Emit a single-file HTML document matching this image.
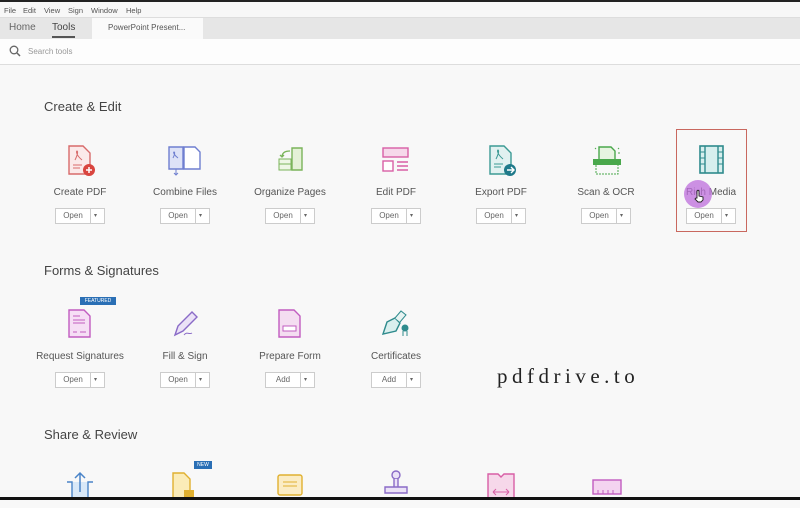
<!DOCTYPE html>
<html><head><style>
*{margin:0;padding:0;box-sizing:border-box}
body{width:800px;height:500px;overflow:hidden;background:#f8f8f8;font-family:"Liberation Sans",sans-serif;position:relative;color:#444}
.a{position:absolute}
.menu{top:0;left:0;width:800px;height:17px;background:#f7f7f7;border-top:2px solid #222;font-size:7.5px;color:#555}
.menu span{position:absolute;top:4px}
.tabs{top:17px;left:0;width:800px;height:22px;background:#e6e6e6;border-top:1px solid #ddd}
.search{top:39px;left:0;width:800px;height:26px;background:#fdfdfd;border-bottom:1px solid #ddd}
h2{position:absolute;font-weight:normal;font-size:13px;color:#444;left:44px}
.t{position:absolute;width:100px;text-align:center;font-size:10px;color:#555}
.btn{position:absolute;width:50px;height:16px;border:1px solid #ccc;background:#fff;font-size:8px;color:#666}
.btn .l{position:absolute;left:0;top:0;width:35px;height:14px;line-height:14px;text-align:center;border-right:1px solid #ccc}
.btn .r{position:absolute;left:38px;top:3px;font-size:6px}
svg{position:absolute}
</style></head><body>
<div class="a menu"><span style="left:4px">File</span><span style="left:23px">Edit</span><span style="left:44px">View</span><span style="left:68px">Sign</span><span style="left:91px">Window</span><span style="left:126px">Help</span></div>
<div class="a tabs">
<span class="a" style="left:9px;top:4px;font-size:10px;color:#666">Home</span>
<span class="a" style="left:52px;top:4px;font-size:10px;color:#444">Tools</span>
<div class="a" style="left:52px;top:18px;width:23px;height:2px;background:#555"></div>
<div class="a" style="left:92px;top:0;width:111px;height:21px;background:#fafafa;font-size:8px;color:#555;padding:5px 0 0 16px">PowerPoint Present...</div>
</div>
<div class="a search">
<svg width="12" height="12" style="left:9px;top:6px"><circle cx="5" cy="5" r="3.8" fill="none" stroke="#666" stroke-width="1.3"/><path d="M8 8l3 3" stroke="#666" stroke-width="1.5"/></svg>
<span class="a" style="left:28px;top:8px;font-size:8px;color:#999">Search tools</span>
</div>

<h2 style="top:99px">Create &amp; Edit</h2>
<h2 style="top:263px">Forms &amp; Signatures</h2>
<h2 style="top:427px">Share &amp; Review</h2>

<svg width="30" height="32" style="left:66px;top:145px"><path d="M3 1h14l7 7v21H3z" fill="#fbe9e9" stroke="#d86b6b" stroke-width="1.4"/><path d="M7 20h9M7 23h7" stroke="#d86b6b"/><path d="M9 15c3-6 3-9 2-9s-1 4 5 9" fill="none" stroke="#d86b6b"/><circle cx="23" cy="25" r="6" fill="#d9453f"/><path d="M23 22v6M20 25h6" stroke="#fff" stroke-width="1.5"/></svg>
<svg width="36" height="34" style="left:167px;top:144px"><path d="M2 3h14v22H2z" fill="#dde2f7" stroke="#6f7fd0" stroke-width="1.4"/><path d="M17 3h11l5 5v17H17z" fill="#fff" stroke="#6f7fd0" stroke-width="1.4"/><path d="M9 25v6M7 29l2 2 2-2" stroke="#6f7fd0" fill="none"/><path d="M6 14c2-4 2-6 1-6s0 3 4 6" stroke="#6f7fd0" fill="none"/></svg>
<svg width="32" height="32" style="left:275px;top:145px"><path d="M17 3h10v22H17z" fill="#e4f1d7" stroke="#7ab45a" stroke-width="1.4"/><path d="M4 14h12v11H4z" fill="#eef6e5" stroke="#7ab45a"/><path d="M4 19h12" stroke="#7ab45a"/><path d="M15 6c-5 0-8 2-8 6M5 10l2 2 2-2" stroke="#7ab45a" fill="none" stroke-width="1.3"/></svg>
<svg width="32" height="32" style="left:380px;top:145px"><rect x="3" y="3" width="25" height="9" fill="#f6d8ea" stroke="#d85fa6" stroke-width="1.4"/><rect x="3" y="16" width="10" height="10" fill="#fff" stroke="#d85fa6" stroke-width="1.4"/><path d="M17 17h11M17 21h11M17 25h11" stroke="#d85fa6" stroke-width="1.4"/></svg>
<svg width="32" height="34" style="left:487px;top:144px"><path d="M3 2h14l7 7v21H3z" fill="#e1f1f0" stroke="#3c9a94" stroke-width="1.4"/><path d="M7 20h9M7 23h7" stroke="#3c9a94"/><path d="M9 15c3-6 3-9 2-9s-1 4 5 9" fill="none" stroke="#3c9a94"/><circle cx="23" cy="26" r="6" fill="#1f7a8a"/><path d="M20 26h6M24 23l3 3-3 3" stroke="#fff" stroke-width="1.4" fill="none"/></svg>
<svg width="34" height="34" style="left:590px;top:143px"><path d="M9 4h12l4 4v10H9z" fill="#e7f4e1" stroke="#4aa84c" stroke-width="1.4"/><rect x="3" y="16" width="28" height="6" fill="#4aa84c"/><path d="M6 22v9h22v-9" stroke="#4aa84c" stroke-dasharray="2 1" fill="none"/><path d="M5 5l1 1M29 5l-1 1M30 10h-2" stroke="#4aa84c"/></svg>
<svg width="30" height="32" style="left:697px;top:144px"><rect x="3" y="2" width="23" height="27" fill="#d7efee" stroke="#2f8b8d" stroke-width="1.6"/><path d="M8 2v27M21 2v27" stroke="#2f8b8d" stroke-width="1.4"/><path d="M3 8h5M3 14h5M3 20h5M21 8h5M21 14h5M21 20h5" stroke="#2f8b8d"/></svg>

<div class="t" style="left:30px;top:187px">Create PDF</div>
<div class="t" style="left:135px;top:187px">Combine Files</div>
<div class="t" style="left:240px;top:187px">Organize Pages</div>
<div class="t" style="left:346px;top:187px">Edit PDF</div>
<div class="t" style="left:451px;top:187px">Export PDF</div>
<div class="t" style="left:556px;top:187px">Scan &amp; OCR</div>
<div class="t" style="left:661px;top:187px">Rich Media</div>

<div class="btn" style="left:55px;top:208px"><span class="l">Open</span><span class="r">▾</span></div>
<div class="btn" style="left:160px;top:208px"><span class="l">Open</span><span class="r">▾</span></div>
<div class="btn" style="left:265px;top:208px"><span class="l">Open</span><span class="r">▾</span></div>
<div class="btn" style="left:371px;top:208px"><span class="l">Open</span><span class="r">▾</span></div>
<div class="btn" style="left:476px;top:208px"><span class="l">Open</span><span class="r">▾</span></div>
<div class="btn" style="left:581px;top:208px"><span class="l">Open</span><span class="r">▾</span></div>
<div class="btn" style="left:686px;top:208px"><span class="l">Open</span><span class="r">▾</span></div>
<div class="a" style="left:676px;top:129px;width:71px;height:103px;border:1px solid #c9685f"></div>
<div class="a" style="left:684px;top:180px;width:28px;height:28px;border-radius:50%;background:rgba(190,110,220,.75)"></div>
<svg width="12" height="14" style="left:693px;top:189px"><path d="M4 9V2.5a1 1 0 0 1 2 0V7l4 1v3l-2 2H5L2 10l1-1z" fill="#fff" stroke="#222" stroke-width="0.9"/></svg>

<div class="a" style="left:80px;top:297px;width:36px;height:8px;background:#2a6fb5;color:#fff;font-size:5px;line-height:8px;text-align:center">FEATURED</div>
<svg width="30" height="32" style="left:66px;top:308px"><path d="M3 2h15l6 6v21H3z" fill="#f6def5" stroke="#c15cc0" stroke-width="1.4"/><path d="M7 8h7M7 12h12M7 15h12M7 24h4M14 24h6" stroke="#c15cc0"/></svg>
<svg width="32" height="32" style="left:170px;top:308px"><path d="M5 27l3-9L22 4l5 5-14 14z" fill="#ebe2f7" stroke="#8a6bc7" stroke-width="1.4"/><path d="M14 27c3-4 5 0 8-2" stroke="#8a6bc7" fill="none"/></svg>
<svg width="30" height="32" style="left:276px;top:308px"><path d="M3 2h15l6 6v21H3z" fill="#f4ddf1" stroke="#c15cc0" stroke-width="1.4"/><rect x="7" y="18" width="13" height="5" fill="#fff" stroke="#c15cc0"/></svg>
<svg width="32" height="32" style="left:380px;top:308px"><path d="M3 26l4-12 8-4 5 5-4 8z" fill="#d9efee" stroke="#2f8b8d" stroke-width="1.4"/><path d="M15 10l6-7 5 4-6 7" fill="#e7f3f2" stroke="#2f8b8d"/><circle cx="25" cy="20" r="3.5" fill="#2f8b8d"/><path d="M23 23v5M27 23v5" stroke="#2f8b8d"/></svg>
<div class="t" style="left:30px;top:351px">Request Signatures</div>
<div class="t" style="left:135px;top:351px">Fill &amp; Sign</div>
<div class="t" style="left:240px;top:351px">Prepare Form</div>
<div class="t" style="left:346px;top:351px">Certificates</div>
<div class="btn" style="left:55px;top:372px"><span class="l">Open</span><span class="r">▾</span></div>
<div class="btn" style="left:160px;top:372px"><span class="l">Open</span><span class="r">▾</span></div>
<div class="btn" style="left:265px;top:372px"><span class="l">Add</span><span class="r">▾</span></div>
<div class="btn" style="left:371px;top:372px"><span class="l">Add</span><span class="r">▾</span></div>

<div class="a" style="left:497px;top:364px;font-family:'Liberation Serif',serif;font-size:21px;letter-spacing:4.5px;color:#222">pdfdrive.to</div>

<div class="a" style="left:194px;top:461px;width:18px;height:8px;background:#2a6fb5;color:#fff;font-size:5px;line-height:8px;text-align:center">NEW</div>
<svg width="30" height="30" style="left:64px;top:470px"><path d="M3 12h5v17h16V12h5" fill="#d8e8f8" stroke="#4a84c8" stroke-width="1.4"/><path d="M16 22V3M11 8l5-5 5 5" stroke="#4a84c8" stroke-width="1.5" fill="none"/></svg>
<svg width="30" height="30" style="left:170px;top:470px"><path d="M3 3h11l6 6v21H3z" fill="#fbecb8" stroke="#e0b030" stroke-width="1.4"/><rect x="14" y="20" width="10" height="10" fill="#e0b030"/></svg>
<svg width="30" height="30" style="left:275px;top:472px"><rect x="3" y="3" width="24" height="20" rx="2" fill="#fbecc4" stroke="#e0b030" stroke-width="1.4"/><path d="M8 10h14M8 14h14" stroke="#e0b030"/></svg>
<svg width="30" height="30" style="left:381px;top:468px"><circle cx="15" cy="7" r="4" fill="#ebe2f7" stroke="#8a6bc7" stroke-width="1.4"/><path d="M13 11v8h4v-8M4 19h22v6H4z" fill="#ebe2f7" stroke="#8a6bc7" stroke-width="1.4"/></svg>
<svg width="32" height="30" style="left:485px;top:470px"><path d="M3 4h10l3 3 3-3h10v26H3z" fill="#f6d8ea" stroke="#d85fa6" stroke-width="1.4"/><path d="M8 22h16M8 22l3-3M8 22l3 3M24 22l-3-3M24 22l-3 3" stroke="#d85fa6"/></svg>
<svg width="32" height="30" style="left:591px;top:478px"><rect x="2" y="2" width="28" height="14" fill="#f4d4f0" stroke="#c15cc0" stroke-width="1.4"/><path d="M7 16v-4M12 16v-4M17 16v-4M22 16v-4" stroke="#c15cc0"/></svg>
<div class="a" style="left:0;top:497px;width:800px;height:3px;background:#111"></div>
</body></html>
